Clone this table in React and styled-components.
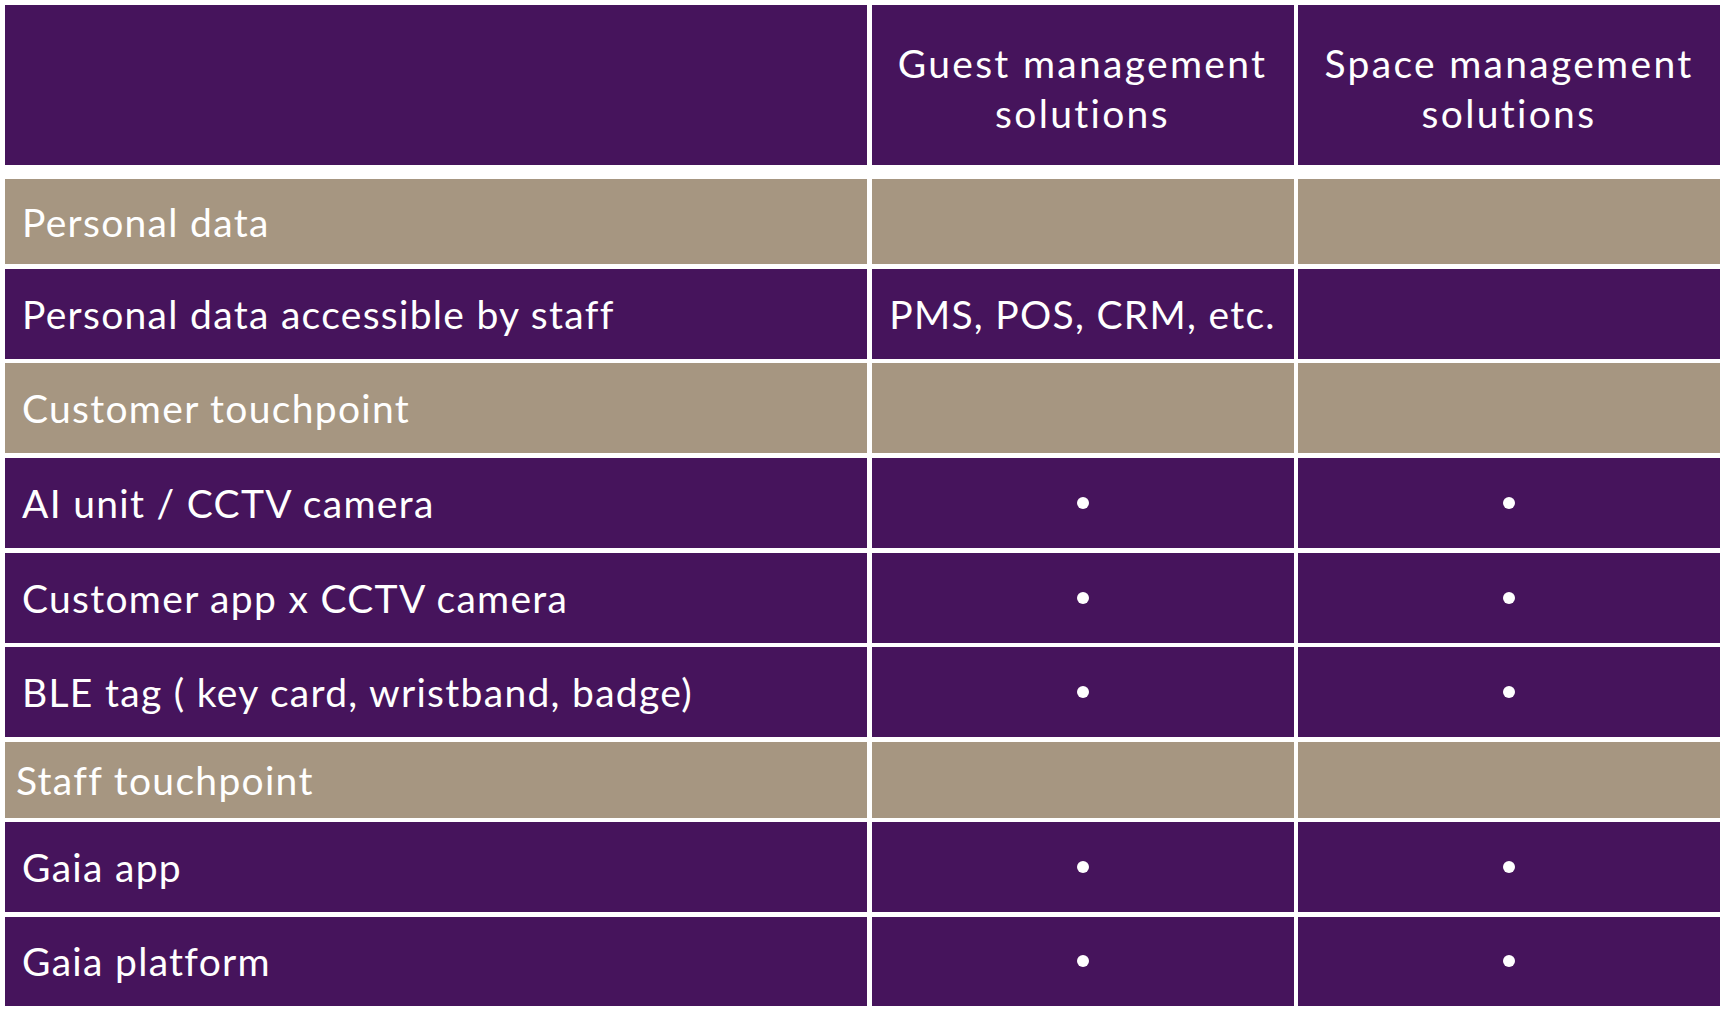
import React from "react";
import styled, { createGlobalStyle } from "styled-components";

const PURPLE = "#46145c";
const TAN = "#a69681";

const GlobalStyle = createGlobalStyle`
  html, body {
    margin: 0;
    padding: 0;
    background: #ffffff;
  }
  body {
    font-family: Lato, "Open Sans", sans-serif;
  }
`;

const Page = styled.div`
  padding: 5px;
`;

const Table = styled.div`
  display: flex;
  flex-direction: column;
  gap: 4.5px;
  width: 1715px;
`;

const Row = styled.div`
  display: grid;
  grid-template-columns: 862px 422px 422px;
  column-gap: 4.5px;
  height: ${(p) => p.$height}px;
  margin-bottom: ${(p) => (p.$head ? 9.5 : 0)}px;
`;

const Cell = styled.div`
  background: ${(p) => (p.$tan ? TAN : PURPLE)};
  color: #ffffff;
  display: flex;
  align-items: center;
  justify-content: ${(p) => (p.$center ? "center" : "flex-start")};
  text-align: ${(p) => (p.$center ? "center" : "left")};
  padding: 0 ${(p) => p.$pad ?? 17}px;
  font-size: 39px;
  font-weight: 400;
  letter-spacing: 1.3px;
  white-space: nowrap;
`;

const HeadText = styled.span`
  line-height: 50px;
  padding-top: 6px;
  letter-spacing: 2.3px;
`;

const Dot = styled.span`
  width: 12px;
  height: 12px;
  border-radius: 50%;
  background: #ffffff;
`;

const dot = <Dot aria-label="yes" />;

const rows = [
  { label: "Personal data", section: true, height: 85 },
  { label: "Personal data accessible by staff", guest: "PMS, POS, CRM, etc.", height: 90 },
  { label: "Customer touchpoint", section: true, height: 90 },
  { label: "AI unit / CCTV camera", guest: dot, space: dot, height: 90.5 },
  { label: "Customer app x CCTV camera", guest: dot, space: dot, height: 90 },
  { label: "BLE tag ( key card, wristband, badge)", guest: dot, space: dot, height: 90 },
  { label: "Staff touchpoint", section: true, height: 76, pad: 11 },
  { label: "Gaia app", guest: dot, space: dot, height: 90 },
  { label: "Gaia platform", guest: dot, space: dot, height: 89.5 },
];

const App = () => {
  return (
    <Page>
      <GlobalStyle />
      <Table>
        <Row $height={160} $head>
          <Cell />
          <Cell $center>
            <HeadText>
              Guest management
              <br />
              solutions
            </HeadText>
          </Cell>
          <Cell $center>
            <HeadText>
              Space management
              <br />
              solutions
            </HeadText>
          </Cell>
        </Row>
        {rows.map((r) => (
          <Row key={r.label} $height={r.height}>
            <Cell $tan={r.section} $pad={r.pad}>
              {r.label}
            </Cell>
            <Cell $tan={r.section} $center>
              {r.guest}
            </Cell>
            <Cell $tan={r.section} $center>
              {r.space}
            </Cell>
          </Row>
        ))}
      </Table>
    </Page>
  );
};

export default App;
